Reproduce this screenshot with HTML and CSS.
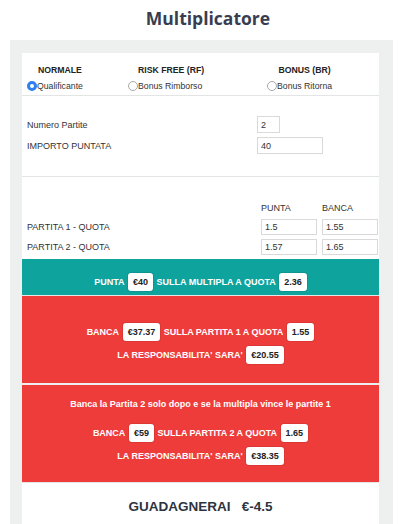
FILE: index.html
```html
<!DOCTYPE html>
<html>
<head>
  <title>Multiplicatore</title>
  <meta name="viewport" content="width=device-width, initial-scale=1.0">
  <meta http-equiv="Content-Type" content="text/html; charset=utf-8" />
  <link rel="stylesheet" href="styles.css">
</head>
<body>
  <h1 class="title">Multiplicatore</h1>

  <div class="panel">
    <div class="card modes">
      <div class="mode">
        <div class="mode-title">NORMALE</div>
        <div class="mode-opt"><span class="radio checked"></span>Qualificante</div>
      </div>
      <div class="mode">
        <div class="mode-title">RISK FREE (RF)</div>
        <div class="mode-opt"><span class="radio"></span>Bonus Rimborso</div>
      </div>
      <div class="mode">
        <div class="mode-title">BONUS (BR)</div>
        <div class="mode-opt"><span class="radio"></span>Bonus Ritorna</div>
      </div>
    </div>

    <div class="card params">
      <label>Numero Partite</label>
      <input class="field field-xs" type="text" value="2">
      <label>IMPORTO PUNTATA</label>
      <input class="field field-md" type="text" value="40">
    </div>

    <div class="card quotes">
      <span></span>
      <span class="col-head">PUNTA</span>
      <span class="col-head">BANCA</span>

      <label>PARTITA 1 - QUOTA</label>
      <input class="field" type="text" value="1.5">
      <input class="field" type="text" value="1.55">

      <label>PARTITA 2 - QUOTA</label>
      <input class="field" type="text" value="1.57">
      <input class="field" type="text" value="1.65">
    </div>

    <div class="band band-punta">
      <div class="band-row">
        PUNTA <span class="pill">€40</span> SULLA MULTIPLA A QUOTA <span class="pill">2.36</span>
      </div>
    </div>

    <div class="band band-banca first">
      <div class="band-row">
        BANCA <span class="pill">€37.37</span> SULLA PARTITA 1 A QUOTA <span class="pill">1.55</span>
      </div>
      <div class="band-row">
        LA RESPONSABILITA' SARA' <span class="pill">€20.55</span>
      </div>
    </div>

    <div class="band band-banca second">
      <div class="band-note">Banca la Partita 2 solo dopo e se la multipla vince le partite 1</div>
      <div class="band-row">
        BANCA <span class="pill">€59</span> SULLA PARTITA 2 A QUOTA <span class="pill">1.65</span>
      </div>
      <div class="band-row">
        LA RESPONSABILITA' SARA' <span class="pill">€38.35</span>
      </div>
    </div>

    <div class="card result">GUADAGNERAI&nbsp;&nbsp; €-4.5</div>
  </div>
</body>
</html>
```

FILE: styles.css
```css
body {
  font-family: "Liberation Sans", Arial, sans-serif;
  font-size: 9px;
  color: #333;
  background-color: #fff;
  margin: 0;
  padding: 0;
}

.title {
  margin: 0;
  height: 40px;
  line-height: 36px;
  padding-left: 16px;
  text-align: center;
  font-family: "Open Sans", sans-serif;
  font-size: 17.5px;
  font-weight: bold;
  color: #383e4f;
}

.panel {
  width: 383px;
  margin-left: 10px;
  padding: 13px 14px 0 12px;
  box-sizing: border-box;
  background-color: #eef0ef;
}

.card {
  background-color: #fff;
  border-bottom: 1px solid #e3e5e5;
}

/* modes */
.modes {
  display: grid;
  grid-template-columns: 101px 139px auto;
  height: 43px;
  padding: 12px 0 0 5px;
  box-sizing: border-box;
  font-size: 8.7px;
}

.mode {
  display: inline-flex;
  flex-direction: column;
  align-items: flex-start;
  justify-self: start;
}

.mode-title {
  align-self: stretch;
  margin-left: 10px;
  margin-bottom: 4px;
  text-align: center;
  font-weight: bold;
  line-height: 11px;
  color: #222;
}

.mode-opt {
  display: flex;
  align-items: center;
  line-height: 12px;
  color: #333;
}

.radio {
  width: 10px;
  height: 10px;
  border-radius: 50%;
  box-sizing: border-box;
  border: 1px solid #a8a8a8;
  background-color: #fff;
}

.radio.checked {
  border: 3px solid #2f7ff0;
  background-color: #fff;
}

/* inputs */
.params {
  display: grid;
  grid-template-columns: 230px auto;
  row-gap: 4px;
  align-items: center;
  padding: 20px 0 22px 5px;
}

.field {
  height: 17px;
  padding: 0 3px;
  box-sizing: border-box;
  border: 1px solid #d9d9d9;
  border-radius: 0;
  font-family: "Liberation Sans", Arial, sans-serif;
  font-size: 9px;
  color: #333;
  background-color: #fff;
  outline: none;
}

.field-xs {
  width: 23px;
}

.field-md {
  width: 66px;
}

.quotes {
  display: grid;
  grid-template-columns: 234px 61px 56px;
  row-gap: 4px;
  align-items: center;
  padding: 25px 0 4px 5px;
  border-bottom: none;
}

.quotes .field {
  width: 56px;
  height: 16px;
}

.col-head {
  line-height: 12px;
  margin-bottom: 1px;
}

/* result bands */
.band {
  color: #fff;
  font-weight: bold;
  font-size: 9px;
}

.band-punta {
  background-color: #0fa39e;
  padding: 14px 0 4px;
  border-bottom: 1px solid #e6e6e6;
}

.band-banca {
  background-color: #ee3c3a;
}

.band-banca.first {
  padding: 27px 0 19px;
  border-bottom: 2px solid #eeeeee;
}

.band-banca.second {
  padding: 13px 0 17px;
  border-bottom: 1px solid #e6e6e6;
}

.band-note {
  text-align: center;
  line-height: 12px;
  margin-bottom: 14px;
}

.band-row {
  display: flex;
  justify-content: center;
  align-items: center;
  gap: 3.5px;
}

.band-row + .band-row {
  margin-top: 5px;
}

.pill {
  display: inline-block;
  height: 18px;
  line-height: 18px;
  padding: 0 5px;
  background-color: #fff;
  border-radius: 3px;
  color: #222;
  box-shadow: 0 0 0 1px rgba(0, 0, 0, 0.08);
}

.result {
  height: 41px;
  line-height: 48px;
  text-align: center;
  font-size: 13.5px;
  font-weight: bold;
  color: #2c3440;
  border-bottom: none;
}
```
